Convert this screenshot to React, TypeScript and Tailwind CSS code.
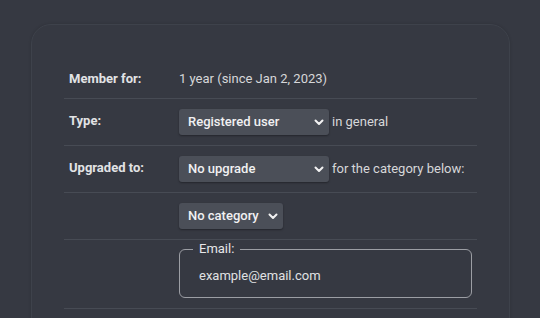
import React from 'react';

const Chevron: React.FC = () => (
    <svg width="10" height="7" viewBox="0 0 10 7" className="shrink-0">
        <path d="M1.5 1.5 L5 5 L8.5 1.5" fill="none" stroke="#f2f2f2" strokeWidth="2" strokeLinecap="round" strokeLinejoin="round" />
    </svg>
);

const Select: React.FC<{ label: string; width: string }> = ({ label, width }) => (
    <div className={`${width} h-[26px] flex items-center justify-between pl-[9px] pr-[5px] bg-[#4b4f58] rounded-[3px] shadow-[0_1px_2px_rgba(0,0,0,0.35)] text-[13px] font-medium text-[#f1f1f2]`}>
        <span>{label}</span>
        <Chevron />
    </div>
);

const Row: React.FC<{ label?: string; children: React.ReactNode; className?: string }> = ({ label, children, className = 'py-[10px]' }) => (
    <div className={`grid grid-cols-[115px_1fr] border-b border-[#474b54] ${className}`}>
        <div className="pl-[5px] pt-[2px] text-[13px] font-bold text-[#e2e3e5]">{label}</div>
        <div className="flex items-center">{children}</div>
    </div>
);

export default function App() {
    return (
        <div className="w-[540px] h-[318px] overflow-hidden bg-[#363942] pt-[24px] pl-[31px]" style={{ fontFamily: 'Roboto, "Liberation Sans", sans-serif' }}>
            <div className="w-[479px] h-[320px] rounded-[20px] border border-[#3e424b] bg-[#363942] shadow-[0_0_3px_rgba(0,0,0,0.15)] pt-[27px] px-[32px]">
                <div className="grid grid-cols-[115px_1fr] border-b border-[#474b54] pt-[14px] pb-[6px]">
                    <div className="pl-[5px] h-[26px] flex items-center text-[13px] font-bold text-[#e2e3e5]">Member for:</div>
                    <div className="h-[26px] flex items-center text-[13px] text-[#d6d7d9]">1 year (since Jan 2, 2023)</div>
                </div>
                <Row label="Type:">
                    <Select label="Registered user" width="w-[150px]" />
                    <span className="ml-[3px] text-[13px] text-[#d6d7d9]">in general</span>
                </Row>
                <Row label="Upgraded to:">
                    <Select label="No upgrade" width="w-[150px]" />
                    <span className="ml-[3px] text-[13px] text-[#d6d7d9]">for the category below:</span>
                </Row>
                <Row>
                    <Select label="No category" width="w-[104px]" />
                </Row>
                <Row className="pt-[1px] pb-[10px]">
                    <fieldset className="w-[293px] h-[57px] border border-[#9c9ea4] rounded-[6px] px-[13px] pb-[10px]">
                        <legend className="px-[6px] text-[13px] leading-[16px] text-[#e6e7e9]">Email:</legend>
                        <div className="pl-[6px] pt-[9px] text-[13px] text-[#e0e1e3]">example@email.com</div>
                    </fieldset>
                </Row>
            </div>
        </div>
    );
}
